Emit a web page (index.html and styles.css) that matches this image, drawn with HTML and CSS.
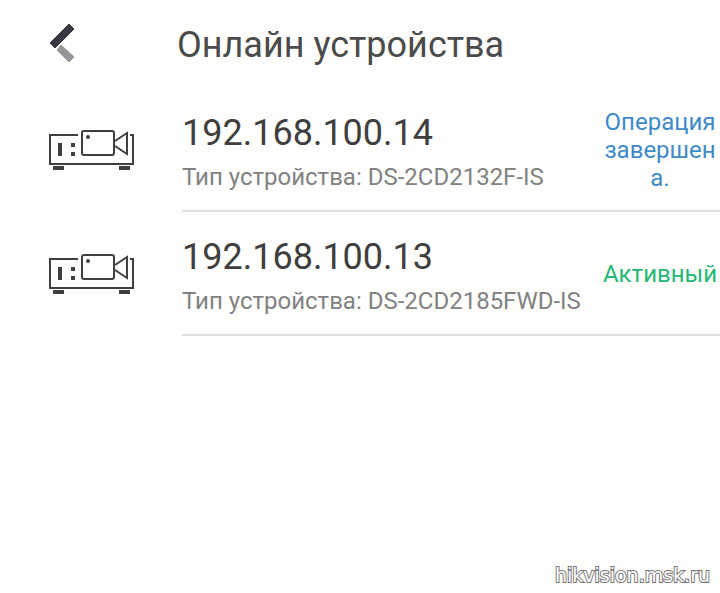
FILE: index.html
```html
<!DOCTYPE html>
<html lang="ru">
<head>
  <meta charset="UTF-8" />
  <meta name="viewport" content="width=device-width, initial-scale=1.0" />
  <title>Онлайн устройства</title>
  <link rel="stylesheet" href="styles.css">
</head>
<body>
  <!-- shared device icon -->
  <svg class="sprite" aria-hidden="true">
    <symbol id="device" viewBox="0 0 88 42">
      <g fill="none" stroke="#3f3f3f" stroke-width="2">
        <path d="M30 6H2V35H85V6H82" />
        <rect x="34" y="2" width="32" height="24" rx="2" />
        <path d="M67 12L79 4V25L67 17" />
      </g>
      <g fill="#3f3f3f">
        <rect x="10" y="14" width="4" height="13" />
        <rect x="23" y="14" width="4" height="4" />
        <rect x="23" y="23" width="4" height="4" />
        <circle cx="40" cy="8" r="2" />
        <rect x="5" y="37" width="11" height="4" />
        <rect x="71" y="37" width="11" height="4" />
      </g>
    </symbol>
  </svg>

  <header class="topbar">
    <button class="back" type="button" aria-label="Назад">
      <svg width="28" height="44" viewBox="0 0 28 44">
        <path d="M21 1L26 6L7 25L2 20Z" fill="#383844" stroke="#383844" stroke-linejoin="round" />
        <path d="M13 22L26 34L21 39L9 27Z" fill="#95959a" stroke="#95959a" stroke-linejoin="round" />
      </svg>
    </button>
    <h1>Онлайн устройства</h1>
  </header>

  <main>
    <ul class="devices">
      <li class="device">
        <svg class="device-icon"><use href="#device" /></svg>
        <div class="device-body">
          <div class="device-info">
            <h2>192.168.100.14</h2>
            <p>Тип устройства: DS-2CD2132F-IS</p>
          </div>
          <span class="status done">Операция завершена.</span>
        </div>
      </li>
      <li class="device">
        <svg class="device-icon"><use href="#device" /></svg>
        <div class="device-body">
          <div class="device-info">
            <h2>192.168.100.13</h2>
            <p>Тип устройства: DS-2CD2185FWD-IS</p>
          </div>
          <span class="status active">Активный</span>
        </div>
      </li>
    </ul>
  </main>

  <footer class="watermark">hikvision.msk.ru</footer>
</body>
</html>
```

FILE: styles.css
```css
:root {
  --bg: #fefefd;
  --title: #4b4b4b;
  --text: #3f3f3f;
  --muted: #828282;
  --line: #dededd;
  --blue: #3e8aca;
  --green: #25b775;
}

* {
  box-sizing: border-box;
}

body {
  margin: 0;
  min-height: 100vh;
  display: flex;
  flex-direction: column;
  background: var(--bg);
  color: var(--text);
  font-family: Roboto, "Liberation Sans", sans-serif;
}

h1, h2, p, ul {
  margin: 0;
  padding: 0;
  font-weight: 400;
}

.sprite {
  position: absolute;
  width: 0;
  height: 0;
}

.topbar {
  display: flex;
  align-items: center;
  height: 88px;
  padding: 2px 0 0 48px;
}
.topbar h1 {
  font-size: 36px;
  line-height: 44px;
  color: var(--title);
}

.back {
  width: 129px;
  padding: 0;
  border: none;
  background: none;
  text-align: left;
  cursor: pointer;
}
.back svg {
  display: block;
}

.devices {
  list-style: none;
}
.device {
  display: flex;
  align-items: center;
  height: 124px;
  padding-left: 48px;
}
.device-icon {
  flex: none;
  width: 88px;
  height: 42px;
  margin-right: 46px;
}
.device-body {
  flex: 1;
  display: flex;
  align-items: center;
  height: 100%;
  padding-top: 2px;
  border-bottom: 2px solid var(--line);
}
.device-info {
  flex: 1;
  padding-top: 10px;
  white-space: nowrap;
}
.device-info h2 {
  font-size: 36px;
  line-height: 44px;
}
.device-info p {
  font-size: 24px;
  line-height: 44px;
  color: var(--muted);
}

.status {
  flex: none;
  width: 120px;
  font-size: 24px;
  line-height: 28px;
  text-align: center;
  overflow-wrap: anywhere;
}
.done {
  color: var(--blue);
}
.active {
  color: var(--green);
}

.watermark {
  margin-top: auto;
  padding: 0 10px 4px;
  text-align: right;
  font-family: "DejaVu Sans", sans-serif;
  font-size: 19px;
  line-height: 28px;
  color: #fff;
  -webkit-text-stroke: 2px #777;
  paint-order: stroke fill;
}
```
